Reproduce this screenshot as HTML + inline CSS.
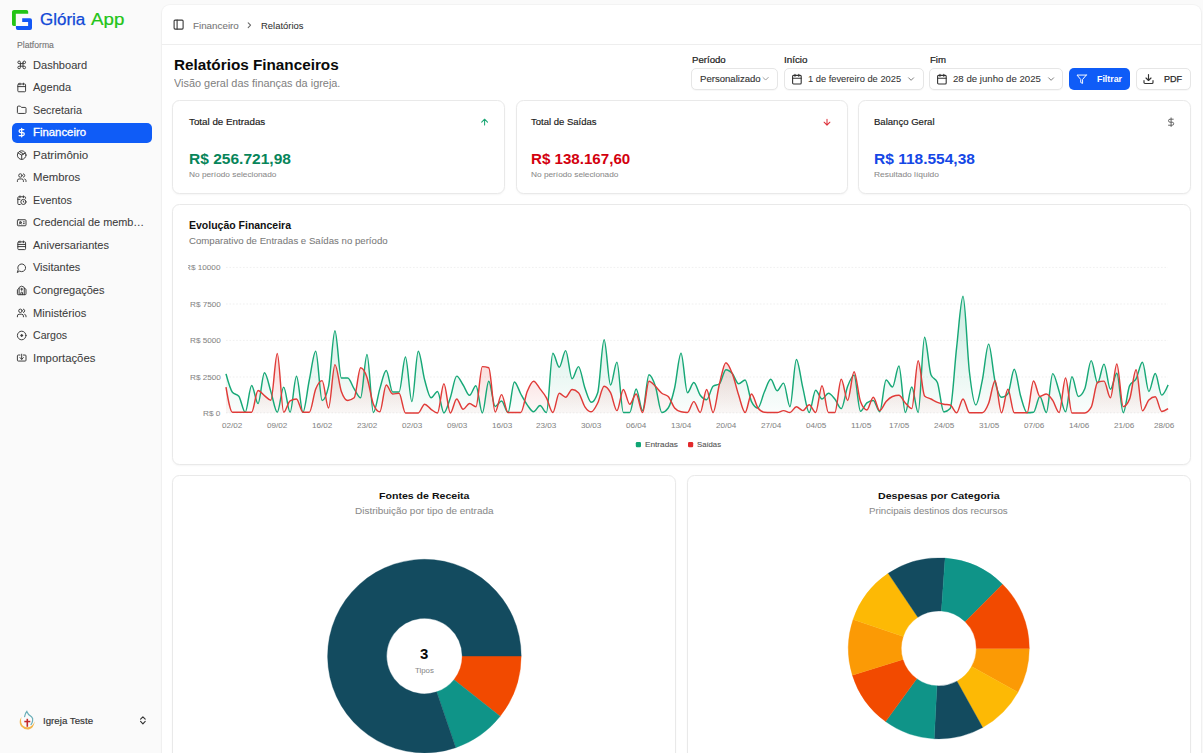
<!DOCTYPE html>
<html><head><meta charset="utf-8"><title>Relatórios Financeiros</title>
<style>
html,body{margin:0;padding:0;}
body{width:1203px;height:753px;overflow:hidden;background:#fafafa;position:relative;font-family:"Liberation Sans", sans-serif;}
.b{position:absolute;}
.t{position:absolute;line-height:1;white-space:nowrap;transform-origin:0 0;}
svg.ov{position:absolute;left:0;top:0;}
</style></head><body>
<div class="b" style="left:162.00px;top:5.00px;width:1039.00px;height:895.00px;background:#fff;border-radius:8px;box-shadow:0 0 0 1px rgba(0,0,0,0.025),0 1px 3px rgba(0,0,0,0.05);"></div><div class="b" style="left:162.00px;top:44.00px;width:1039.00px;height:1.00px;background:#eeeeee;"></div><div class="b" style="left:172.20px;top:100.30px;width:332.90px;height:94.00px;background:#fff;border:1px solid #e9e9e9;border-radius:7.5px;box-shadow:0 1px 2px rgba(0,0,0,0.04);box-sizing:border-box;"></div><div class="b" style="left:515.50px;top:100.30px;width:332.30px;height:94.00px;background:#fff;border:1px solid #e9e9e9;border-radius:7.5px;box-shadow:0 1px 2px rgba(0,0,0,0.04);box-sizing:border-box;"></div><div class="b" style="left:857.80px;top:100.30px;width:332.80px;height:94.00px;background:#fff;border:1px solid #e9e9e9;border-radius:7.5px;box-shadow:0 1px 2px rgba(0,0,0,0.04);box-sizing:border-box;"></div><div class="b" style="left:172.20px;top:204.40px;width:1018.40px;height:260.60px;background:#fff;border:1px solid #e9e9e9;border-radius:7.5px;box-shadow:0 1px 2px rgba(0,0,0,0.04);box-sizing:border-box;"></div><div class="b" style="left:172.20px;top:475.40px;width:504.00px;height:424.60px;background:#fff;border:1px solid #e9e9e9;border-radius:7.5px;box-shadow:0 1px 2px rgba(0,0,0,0.04);box-sizing:border-box;"></div><div class="b" style="left:687.10px;top:475.40px;width:503.50px;height:424.60px;background:#fff;border:1px solid #e9e9e9;border-radius:7.5px;box-shadow:0 1px 2px rgba(0,0,0,0.04);box-sizing:border-box;"></div><div class="b" style="left:691.00px;top:68.00px;width:87.00px;height:22.00px;background:#fff;border:1px solid #e6e6e6;border-radius:5px;box-shadow:0 1px 1px rgba(0,0,0,0.03);box-sizing:border-box;"></div><div class="b" style="left:784.20px;top:68.00px;width:139.40px;height:21.80px;background:#fff;border:1px solid #e6e6e6;border-radius:5px;box-shadow:0 1px 1px rgba(0,0,0,0.03);box-sizing:border-box;"></div><div class="b" style="left:929.20px;top:68.00px;width:134.10px;height:21.80px;background:#fff;border:1px solid #e6e6e6;border-radius:5px;box-shadow:0 1px 1px rgba(0,0,0,0.03);box-sizing:border-box;"></div><div class="b" style="left:1069.00px;top:68.00px;width:61.30px;height:22.00px;background:#0f5cf7;border-radius:5px;"></div><div class="b" style="left:1135.80px;top:68.00px;width:55.10px;height:22.00px;background:#fff;border:1px solid #e6e6e6;border-radius:5px;box-shadow:0 1px 1px rgba(0,0,0,0.03);box-sizing:border-box;"></div><div class="b" style="left:12.10px;top:123.00px;width:140.10px;height:19.80px;background:#0f5cf7;border-radius:5px;"></div>
<svg class="ov" width="1203" height="753" viewBox="0 0 1203 753">
<g><path d="M14 10 H26.5 Q28.2 10 28.2 11.8 V13.8 H15.8 V26 H13.8 Q12 26 12 24.2 V11.8 Q12 10 14 10Z" fill="#22c415"/><path d="M22.2 18.3 H30 Q32 18.3 32 20.3 V28 Q32 30 30 30 H17.8 Q15.9 30 15.9 28 V26.1 H28.1 V22 H22.2Z" fill="#1357f5"/></g><g transform="translate(16.540,59.740) scale(0.4300)" color="#3d3d3d" fill="none" stroke="#3d3d3d" stroke-width="2.3" stroke-linecap="round" stroke-linejoin="round"><path d="M15 6v12a3 3 0 1 0 3-3H6a3 3 0 1 0 3 3V6a3 3 0 1 0-3 3h12a3 3 0 1 0-3-3"/></g><g transform="translate(16.540,82.290) scale(0.4300)" color="#3d3d3d" fill="none" stroke="#3d3d3d" stroke-width="2.3" stroke-linecap="round" stroke-linejoin="round"><rect x="3" y="4" width="18" height="18" rx="2"/><path d="M16 2v4M8 2v4M3 10h18"/></g><g transform="translate(16.540,104.840) scale(0.4300)" color="#3d3d3d" fill="none" stroke="#3d3d3d" stroke-width="2.3" stroke-linecap="round" stroke-linejoin="round"><path d="M20 20a2 2 0 0 0 2-2V8a2 2 0 0 0-2-2h-7.9a2 2 0 0 1-1.69-.9L9.6 3.9A2 2 0 0 0 7.93 3H4a2 2 0 0 0-2 2v13a2 2 0 0 0 2 2Z"/></g><g transform="translate(16.540,127.390) scale(0.4300)" color="#ffffff" fill="none" stroke="#ffffff" stroke-width="2.9" stroke-linecap="round" stroke-linejoin="round"><path d="M12 2v20M17 5H9.5a3.5 3.5 0 0 0 0 7h5a3.5 3.5 0 0 1 0 7H6"/></g><g transform="translate(16.540,149.940) scale(0.4300)" color="#3d3d3d" fill="none" stroke="#3d3d3d" stroke-width="2.3" stroke-linecap="round" stroke-linejoin="round"><circle cx="12" cy="12" r="10"/><path d="M12 22V12M3.3 7l8.7 5 8.7-5M7.5 4.27l9 5.15"/></g><g transform="translate(16.540,172.490) scale(0.4300)" color="#3d3d3d" fill="none" stroke="#3d3d3d" stroke-width="2.3" stroke-linecap="round" stroke-linejoin="round"><path d="M16 21v-2a4 4 0 0 0-4-4H6a4 4 0 0 0-4 4v2"/><circle cx="9" cy="7" r="4"/><path d="M22 21v-2a4 4 0 0 0-3-3.87M16 3.13a4 4 0 0 1 0 7.75"/></g><g transform="translate(16.540,195.040) scale(0.4300)" color="#3d3d3d" fill="none" stroke="#3d3d3d" stroke-width="2.3" stroke-linecap="round" stroke-linejoin="round"><path d="M21 7.5V6a2 2 0 0 0-2-2H5a2 2 0 0 0-2 2v14a2 2 0 0 0 2 2h3.5M16 2v4M8 2v4M3 10h5M17.5 17.5 16 16.3V14"/><circle cx="16" cy="16" r="6"/></g><g transform="translate(16.540,217.590) scale(0.4300)" color="#3d3d3d" fill="none" stroke="#3d3d3d" stroke-width="2.3" stroke-linecap="round" stroke-linejoin="round"><path d="M16 10h2M16 14h2M6.17 15a3 3 0 0 1 5.66 0"/><circle cx="9" cy="11" r="2"/><rect x="2" y="5" width="20" height="14" rx="2"/></g><g transform="translate(16.540,240.140) scale(0.4300)" color="#3d3d3d" fill="none" stroke="#3d3d3d" stroke-width="2.3" stroke-linecap="round" stroke-linejoin="round"><rect x="3" y="4" width="18" height="18" rx="2"/><path d="M16 2v4M8 2v4M3 10h18M3 15h18"/></g><g transform="translate(16.540,262.690) scale(0.4300)" color="#3d3d3d" fill="none" stroke="#3d3d3d" stroke-width="2.3" stroke-linecap="round" stroke-linejoin="round"><path d="M7.9 20A9 9 0 1 0 4 16.1L2 22Z"/></g><g transform="translate(16.540,285.240) scale(0.4300)" color="#3d3d3d" fill="none" stroke="#3d3d3d" stroke-width="2.3" stroke-linecap="round" stroke-linejoin="round"><path d="M10 9h4M12 7v5M14 22v-4a2 2 0 0 0-4 0v4M18 22V5.618a1 1 0 0 0-.553-.894l-4.553-2.277a2 2 0 0 0-1.788 0L6.553 4.724A1 1 0 0 0 6 5.618V22M18 7l3.447 1.724a1 1 0 0 1 .553.894V20a2 2 0 0 1-2 2H4a2 2 0 0 1-2-2v-9.382a1 1 0 0 1 .553-.894L6 7"/></g><g transform="translate(16.540,307.790) scale(0.4300)" color="#3d3d3d" fill="none" stroke="#3d3d3d" stroke-width="2.3" stroke-linecap="round" stroke-linejoin="round"><path d="M16 21v-2a4 4 0 0 0-4-4H6a4 4 0 0 0-4 4v2"/><circle cx="9" cy="7" r="4"/><path d="M22 21v-2a4 4 0 0 0-3-3.87M16 3.13a4 4 0 0 1 0 7.75"/></g><g transform="translate(16.540,330.340) scale(0.4300)" color="#3d3d3d" fill="none" stroke="#3d3d3d" stroke-width="2.3" stroke-linecap="round" stroke-linejoin="round"><circle cx="12" cy="12" r="10"/><circle cx="12" cy="12" r="2.2" fill="currentColor"/></g><g transform="translate(16.540,352.890) scale(0.4300)" color="#3d3d3d" fill="none" stroke="#3d3d3d" stroke-width="2.3" stroke-linecap="round" stroke-linejoin="round"><path d="M12 3v12M8 11l4 4 4-4M8 5H4a2 2 0 0 0-2 2v10a2 2 0 0 0 2 2h16a2 2 0 0 0 2-2V7a2 2 0 0 0-2-2h-4"/></g><g><path d="M21.4,716.9 Q18.2,722 21,726.3 Q24.5,730.2 29.5,729.2 Q33.8,727.8 34.8,721.2 Q32.6,726.6 28,727.3 Q22.5,727.5 21.2,722.5 Q20.8,719.8 21.4,716.9Z" fill="#f4b54a"/><path d="M24.6,716.6 Q25,713.5 26.8,711.5 Q27.8,714.5 31.5,716.8 Q33.2,718.2 32.6,720.8 Q32.2,723 31,724.6" fill="none" stroke="#6aaeb8" stroke-width="1.2" stroke-linecap="round"/><rect x="26.5" y="718.8" width="1.6" height="8" fill="#c42a2a"/><rect x="24.3" y="720.8" width="6" height="1.5" fill="#c42a2a"/></g><path d="M140.6,719.2 L142.9,716.8 L145.2,719.2 M140.6,721.4 L142.9,723.8 L145.2,721.4" fill="none" stroke="#333" stroke-width="1.15" stroke-linecap="round" stroke-linejoin="round"/><g transform="translate(172.600,18.600) scale(0.5000)" color="#3a3a3a" fill="none" stroke="#3a3a3a" stroke-width="2.2" stroke-linecap="round" stroke-linejoin="round"><rect x="3" y="3" width="18" height="18" rx="2"/><path d="M9 3v18"/></g><path d="M248.2,22.8 L250.6,25.2 L248.2,27.6" fill="none" stroke="#666" stroke-width="1.05" stroke-linecap="round" stroke-linejoin="round"/><g transform="translate(760.400,73.550) scale(0.4333)" color="#9a9a9a" fill="none" stroke="#9a9a9a" stroke-width="2.2" stroke-linecap="round" stroke-linejoin="round"><path d="m6 9 6 6 6-6"/></g><g transform="translate(791.167,73.467) scale(0.4778)" color="#333333" fill="none" stroke="#333333" stroke-width="2.3" stroke-linecap="round" stroke-linejoin="round"><rect x="3" y="4" width="18" height="18" rx="2"/><path d="M16 2v4M8 2v4M3 10h18"/></g><g transform="translate(906.100,74.050) scale(0.4167)" color="#777777" fill="none" stroke="#777777" stroke-width="2.3" stroke-linecap="round" stroke-linejoin="round"><path d="m6 9 6 6 6-6"/></g><g transform="translate(936.167,73.467) scale(0.4778)" color="#333333" fill="none" stroke="#333333" stroke-width="2.3" stroke-linecap="round" stroke-linejoin="round"><rect x="3" y="4" width="18" height="18" rx="2"/><path d="M16 2v4M8 2v4M3 10h18"/></g><g transform="translate(1046.100,74.050) scale(0.4167)" color="#777777" fill="none" stroke="#777777" stroke-width="2.3" stroke-linecap="round" stroke-linejoin="round"><path d="m6 9 6 6 6-6"/></g><g transform="translate(1076.070,73.670) scale(0.4650)" color="#ffffff" fill="none" stroke="#ffffff" stroke-width="2.1" stroke-linecap="round" stroke-linejoin="round"><polygon points="22 3 2 3 10 12.46 10 19 14 21 14 12.46 22 3"/></g><g transform="translate(1142.500,73.000) scale(0.5000)" color="#333333" fill="none" stroke="#333333" stroke-width="2.3" stroke-linecap="round" stroke-linejoin="round"><path d="M21 15v4a2 2 0 0 1-2 2H5a2 2 0 0 1-2-2v-4M7 10l5 5 5-5M12 15V3"/></g><g transform="translate(479.629,117.129) scale(0.4143)" color="#1aa673" fill="none" stroke="#1aa673" stroke-width="2.5" stroke-linecap="round" stroke-linejoin="round"><path d="m5 12 7-7 7 7M12 19V5"/></g><g transform="translate(822.029,117.229) scale(0.4143)" color="#dd2f38" fill="none" stroke="#dd2f38" stroke-width="2.5" stroke-linecap="round" stroke-linejoin="round"><path d="M12 5v14M19 12l-7 7-7-7"/></g><g transform="translate(1165.940,117.040) scale(0.4300)" color="#555555" fill="none" stroke="#555555" stroke-width="2.1" stroke-linecap="round" stroke-linejoin="round"><path d="M12 2v20M17 5H9.5a3.5 3.5 0 0 0 0 7h5a3.5 3.5 0 0 1 0 7H6"/></g><line x1="226" y1="267.4" x2="1168" y2="267.4" stroke="#e9e9e9" stroke-width="0.75" stroke-dasharray="1.6 1.8"/><line x1="226" y1="304.0" x2="1168" y2="304.0" stroke="#e9e9e9" stroke-width="0.75" stroke-dasharray="1.6 1.8"/><line x1="226" y1="340.4" x2="1168" y2="340.4" stroke="#e9e9e9" stroke-width="0.75" stroke-dasharray="1.6 1.8"/><line x1="226" y1="377.0" x2="1168" y2="377.0" stroke="#e9e9e9" stroke-width="0.75" stroke-dasharray="1.6 1.8"/><line x1="226" y1="412.9" x2="1168" y2="412.9" stroke="#e9e9e9" stroke-width="0.75" stroke-dasharray="1.6 1.8"/><defs><linearGradient id="gg" x1="0" y1="0" x2="0" y2="1"><stop offset="0" stop-color="#10a574" stop-opacity="0.22"/><stop offset="1" stop-color="#10a574" stop-opacity="0.02"/></linearGradient><linearGradient id="rg" x1="0" y1="0" x2="0" y2="1"><stop offset="0" stop-color="#e0322f" stop-opacity="0.2"/><stop offset="1" stop-color="#e0322f" stop-opacity="0.03"/></linearGradient></defs><path d="M226.00,373.90C228.14,381.72,230.27,389.53,232.41,392.20C234.55,394.87,236.68,393.53,238.82,396.20C240.95,398.87,243.09,412.20,245.23,412.20C247.36,412.20,249.50,385.40,251.64,385.40C253.77,385.40,255.91,403.60,258.04,403.60C260.18,403.60,262.32,372.80,264.45,372.80C266.59,372.80,268.73,385.03,270.86,391.60C273.00,398.17,275.13,412.20,277.27,412.20C279.41,412.20,281.54,387.10,283.68,387.10C285.82,387.10,287.95,412.20,290.09,412.20C292.22,412.20,294.36,376.20,296.50,376.20C298.63,376.20,300.77,412.20,302.91,412.20C305.04,412.20,307.18,390.17,309.31,380.00C311.45,369.83,313.59,351.20,315.72,351.20C317.86,351.20,320.00,400.40,322.13,400.40C324.27,400.40,326.41,395.70,328.54,386.30C330.68,376.90,332.81,330.80,334.95,330.80C337.09,330.80,339.22,378.00,341.36,378.00C343.50,378.00,345.63,378.00,347.77,378.00C349.90,378.00,352.04,385.60,354.18,388.90C356.31,392.20,358.45,397.80,360.59,397.80C362.72,397.80,364.86,354.40,366.99,354.40C369.13,354.40,371.27,412.50,373.40,412.50C375.54,412.50,377.68,395.92,379.81,388.90C381.95,381.88,384.08,370.40,386.22,370.40C388.36,370.40,390.49,392.00,392.63,392.00C394.77,392.00,396.90,392.00,399.04,392.00C401.18,392.00,403.31,357.00,405.45,357.00C407.58,357.00,409.72,401.60,411.86,401.60C413.99,401.60,416.13,351.30,418.27,351.30C420.40,351.30,422.54,372.25,424.67,380.00C426.81,387.75,428.95,397.80,431.08,397.80C433.22,397.80,435.36,391.40,437.49,391.40C439.63,391.40,441.76,412.90,443.90,412.90C446.04,412.90,448.17,403.93,450.31,397.80C452.45,391.67,454.58,376.10,456.72,376.10C458.85,376.10,460.99,381.80,463.13,385.00C465.26,388.20,467.40,395.30,469.54,395.30C471.67,395.30,473.81,385.70,475.94,385.70C478.08,385.70,480.22,412.90,482.35,412.90C484.49,412.90,486.63,381.20,488.76,381.20C490.90,381.20,493.04,406.40,495.17,406.40C497.31,406.40,499.44,401.00,501.58,401.00C503.72,401.00,505.85,412.50,507.99,412.50C510.13,412.50,512.26,381.90,514.40,381.90C516.53,381.90,518.67,390.18,520.81,394.00C522.94,397.82,525.08,401.83,527.22,404.80C529.35,407.77,531.49,411.80,533.62,411.80C535.76,411.80,537.90,405.50,540.03,405.50C542.17,405.50,544.31,412.50,546.44,412.50C548.58,412.50,550.71,353.20,552.85,353.20C554.99,353.20,557.12,367.20,559.26,367.20C561.40,367.20,563.53,350.60,565.67,350.60C567.80,350.60,569.94,378.70,572.08,378.70C574.21,378.70,576.35,366.60,578.49,366.60C580.62,366.60,582.76,382.05,584.90,388.00C587.03,393.95,589.17,402.30,591.30,402.30C593.44,402.30,595.58,399.10,597.71,392.70C599.85,386.30,601.99,339.80,604.12,339.80C606.26,339.80,608.39,385.00,610.53,385.00C612.67,385.00,614.80,362.10,616.94,362.10C619.08,362.10,621.21,412.50,623.35,412.50C625.48,412.50,627.62,412.50,629.76,412.50C631.89,412.50,634.03,388.90,636.17,388.90C638.30,388.90,640.44,410.60,642.57,410.60C644.71,410.60,646.85,374.80,648.98,374.80C651.12,374.80,653.26,380.02,655.39,386.30C657.53,392.58,659.67,412.50,661.80,412.50C663.94,412.50,666.07,411.00,668.21,408.00C670.35,405.00,672.48,397.13,674.62,388.00C676.76,378.87,678.89,353.20,681.03,353.20C683.16,353.20,685.30,392.70,687.44,392.70C689.57,392.70,691.71,382.50,693.85,382.50C695.98,382.50,698.12,392.43,700.25,395.30C702.39,398.17,704.53,399.70,706.66,399.70C708.80,399.70,710.94,387.97,713.07,386.30C715.21,384.63,717.34,385.47,719.48,383.80C721.62,382.13,723.75,369.70,725.89,369.70C728.03,369.70,730.16,371.25,732.30,373.60C734.43,375.95,736.57,383.80,738.71,383.80C740.84,383.80,742.98,380.00,745.12,380.00C747.25,380.00,749.39,397.33,751.53,401.60C753.66,405.87,755.80,408.00,757.93,408.00C760.07,408.00,762.21,396.78,764.34,392.00C766.48,387.22,768.62,379.30,770.75,379.30C772.89,379.30,775.02,390.80,777.16,390.80C779.30,390.80,781.43,383.10,783.57,383.10C785.71,383.10,787.84,406.70,789.98,406.70C792.11,406.70,794.25,359.50,796.39,359.50C798.52,359.50,800.66,378.77,802.80,387.60C804.93,396.43,807.07,412.50,809.20,412.50C811.34,412.50,813.48,390.20,815.61,390.20C817.75,390.20,819.89,399.00,822.02,399.00C824.16,399.00,826.30,393.30,828.43,393.30C830.57,393.30,832.70,396.45,834.84,399.00C836.98,401.55,839.11,408.60,841.25,408.60C843.39,408.60,845.52,391.88,847.66,386.30C849.79,380.72,851.93,375.10,854.07,375.10C856.20,375.10,858.34,411.20,860.48,411.20C862.61,411.20,864.75,404.57,866.88,402.90C869.02,401.23,871.16,400.40,873.29,400.40C875.43,400.40,877.57,411.80,879.70,411.80C881.84,411.80,883.97,380.00,886.11,380.00C888.25,380.00,890.38,387.00,892.52,387.00C894.66,387.00,896.79,365.90,898.93,365.90C901.06,365.90,903.20,412.50,905.34,412.50C907.47,412.50,909.61,387.00,911.75,387.00C913.88,387.00,916.02,412.50,918.16,412.50C920.29,412.50,922.43,337.20,924.56,337.20C926.70,337.20,928.84,369.67,930.97,374.80C933.11,379.93,935.25,377.37,937.38,382.50C939.52,387.63,941.65,411.90,943.79,411.90C945.93,411.90,948.06,410.77,950.20,408.50C952.34,406.23,954.47,366.30,956.61,347.60C958.74,328.90,960.88,296.30,963.02,296.30C965.15,296.30,967.29,353.88,969.43,372.00C971.56,390.12,973.70,405.00,975.83,405.00C977.97,405.00,980.11,390.85,982.24,380.70C984.38,370.55,986.52,344.10,988.65,344.10C990.79,344.10,992.92,372.65,995.06,381.50C997.20,390.35,999.33,397.20,1001.47,397.20C1003.61,397.20,1005.74,396.03,1007.88,393.70C1010.02,391.37,1012.15,369.30,1014.29,369.30C1016.42,369.30,1018.56,389.05,1020.70,396.30C1022.83,403.55,1024.97,412.80,1027.11,412.80C1029.24,412.80,1031.38,412.63,1033.51,412.30C1035.65,411.97,1037.79,396.40,1039.92,396.40C1042.06,396.40,1044.20,412.50,1046.33,412.50C1048.47,412.50,1050.60,373.60,1052.74,373.60C1054.88,373.60,1057.01,385.03,1059.15,391.40C1061.29,397.77,1063.42,411.80,1065.56,411.80C1067.69,411.80,1069.83,376.80,1071.97,376.80C1074.10,376.80,1076.24,396.40,1078.38,396.40C1080.51,396.40,1082.65,393.87,1084.79,388.80C1086.92,383.73,1089.06,360.60,1091.19,360.60C1093.33,360.60,1095.47,382.90,1097.60,382.90C1099.74,382.90,1101.88,364.10,1104.01,364.10C1106.15,364.10,1108.28,389.30,1110.42,389.30C1112.56,389.30,1114.69,373.20,1116.83,373.20C1118.97,373.20,1121.10,412.70,1123.24,412.70C1125.37,412.70,1127.51,390.07,1129.65,385.60C1131.78,381.13,1133.92,382.80,1136.06,378.90C1138.19,375.00,1140.33,362.20,1142.46,362.20C1144.60,362.20,1146.74,391.40,1148.87,391.40C1151.01,391.40,1153.15,373.50,1155.28,373.50C1157.42,373.50,1159.55,395.10,1161.69,395.10C1163.83,395.10,1165.96,390.00,1168.10,384.90L1168.1,412.9L226,412.9Z" fill="url(#gg)"/><path d="M226.00,387.10C228.14,399.65,230.27,412.20,232.41,412.20C234.55,412.20,236.68,412.20,238.82,412.20C240.95,412.20,243.09,412.20,245.23,412.20C247.36,412.20,249.50,412.20,251.64,412.20C253.77,412.20,255.91,390.50,258.04,390.50C260.18,390.50,262.32,393.98,264.45,395.60C266.59,397.22,268.73,400.20,270.86,400.20C273.00,400.20,275.13,353.40,277.27,353.40C279.41,353.40,281.54,412.20,283.68,412.20C285.82,412.20,287.95,402.00,290.09,400.80C292.22,399.60,294.36,399.00,296.50,399.00C298.63,399.00,300.77,412.20,302.91,412.20C305.04,412.20,307.18,412.20,309.31,412.20C311.45,412.20,313.59,394.27,315.72,389.00C317.86,383.73,320.00,380.60,322.13,380.60C324.27,380.60,326.41,408.00,328.54,408.00C330.68,408.00,332.81,364.60,334.95,364.60C337.09,364.60,339.22,385.43,341.36,391.40C343.50,397.37,345.63,400.40,347.77,400.40C349.90,400.40,352.04,399.53,354.18,397.80C356.31,396.07,358.45,367.80,360.59,367.80C362.72,367.80,364.86,371.33,366.99,377.40C369.13,383.47,371.27,399.13,373.40,404.20C375.54,409.27,377.68,411.80,379.81,411.80C381.95,411.80,384.08,385.00,386.22,385.00C388.36,385.00,390.49,394.00,392.63,394.00C394.77,394.00,396.90,393.30,399.04,393.30C401.18,393.30,403.31,412.90,405.45,412.90C407.58,412.90,409.72,412.90,411.86,412.90C413.99,412.90,416.13,412.90,418.27,412.90C420.40,412.90,422.54,404.20,424.67,404.20C426.81,404.20,428.95,407.85,431.08,409.30C433.22,410.75,435.36,412.90,437.49,412.90C439.63,412.90,441.76,383.80,443.90,383.80C446.04,383.80,448.17,412.90,450.31,412.90C452.45,412.90,454.58,399.00,456.72,399.00C458.85,399.00,460.99,409.30,463.13,409.30C465.26,409.30,467.40,403.50,469.54,403.50C471.67,403.50,473.81,406.70,475.94,406.70C478.08,406.70,480.22,366.60,482.35,366.60C484.49,366.60,486.63,367.00,488.76,367.80C490.90,368.60,493.04,412.00,495.17,412.00C497.31,412.00,499.44,394.60,501.58,394.60C503.72,394.60,505.85,412.50,507.99,412.50C510.13,412.50,512.26,412.50,514.40,412.50C516.53,412.50,518.67,412.50,520.81,412.50C522.94,412.50,525.08,396.62,527.22,391.40C529.35,386.18,531.49,381.20,533.62,381.20C535.76,381.20,537.90,386.13,540.03,388.90C542.17,391.67,544.31,393.87,546.44,397.80C548.58,401.73,550.71,412.50,552.85,412.50C554.99,412.50,557.12,393.30,559.26,393.30C561.40,393.30,563.53,397.20,565.67,397.20C567.80,397.20,569.94,389.50,572.08,389.50C574.21,389.50,576.35,390.57,578.49,392.70C580.62,394.83,582.76,403.62,584.90,406.80C587.03,409.98,589.17,411.80,591.30,411.80C593.44,411.80,595.58,407.25,597.71,403.00C599.85,398.75,601.99,386.30,604.12,386.30C606.26,386.30,608.39,388.65,610.53,392.70C612.67,396.75,614.80,410.60,616.94,410.60C619.08,410.60,621.21,389.50,623.35,389.50C625.48,389.50,627.62,404.20,629.76,404.20C631.89,404.20,634.03,394.00,636.17,394.00C638.30,394.00,640.44,412.50,642.57,412.50C644.71,412.50,646.85,381.20,648.98,381.20C651.12,381.20,653.26,384.28,655.39,386.30C657.53,388.32,659.67,391.60,661.80,393.30C663.94,395.00,666.07,394.37,668.21,396.50C670.35,398.63,672.48,405.47,674.62,408.00C676.76,410.53,678.89,411.33,681.03,411.80C683.16,412.27,685.30,412.50,687.44,412.50C689.57,412.50,691.71,401.60,693.85,401.60C695.98,401.60,698.12,412.50,700.25,412.50C702.39,412.50,704.53,389.50,706.66,389.50C708.80,389.50,710.94,412.50,713.07,412.50C715.21,412.50,717.34,392.10,719.48,383.80C721.62,375.50,723.75,362.70,725.89,362.70C728.03,362.70,730.16,368.17,732.30,373.60C734.43,379.03,736.57,388.82,738.71,395.30C740.84,401.78,742.98,412.50,745.12,412.50C747.25,412.50,749.39,394.00,751.53,394.00C753.66,394.00,755.80,405.20,757.93,408.00C760.07,410.80,762.21,412.00,764.34,412.20C766.48,412.40,768.62,412.50,770.75,412.50C772.89,412.50,775.02,412.50,777.16,412.50C779.30,412.50,781.43,410.60,783.57,410.60C785.71,410.60,787.84,412.50,789.98,412.50C792.11,412.50,794.25,406.70,796.39,406.70C798.52,406.70,800.66,410.60,802.80,410.60C804.93,410.60,807.07,404.80,809.20,404.80C811.34,404.80,813.48,412.50,815.61,412.50C817.75,412.50,819.89,385.70,822.02,385.70C824.16,385.70,826.30,412.50,828.43,412.50C830.57,412.50,832.70,412.50,834.84,412.50C836.98,412.50,839.11,379.30,841.25,379.30C843.39,379.30,845.52,400.40,847.66,400.40C849.79,400.40,851.93,371.70,854.07,371.70C856.20,371.70,858.34,396.00,860.48,401.60C862.61,407.20,864.75,410.00,866.88,410.00C869.02,410.00,871.16,397.20,873.29,397.20C875.43,397.20,877.57,410.60,879.70,410.60C881.84,410.60,883.97,403.95,886.11,401.60C888.25,399.25,890.38,397.30,892.52,396.50C894.66,395.70,896.79,395.30,898.93,395.30C901.06,395.30,903.20,400.68,905.34,402.90C907.47,405.12,909.61,408.60,911.75,408.60C913.88,408.60,916.02,360.80,918.16,360.80C920.29,360.80,922.43,393.83,924.56,395.90C926.70,397.97,928.84,397.93,930.97,399.00C933.11,400.07,935.25,401.43,937.38,402.30C939.52,403.17,941.65,403.75,943.79,404.20C945.93,404.65,948.06,404.47,950.20,405.00C952.34,405.53,954.47,412.80,956.61,412.80C958.74,412.80,960.88,398.90,963.02,398.90C965.15,398.90,967.29,412.80,969.43,412.80C971.56,412.80,973.70,412.80,975.83,412.80C977.97,412.80,980.11,412.80,982.24,412.80C984.38,412.80,986.52,408.65,988.65,403.30C990.79,397.95,992.92,380.70,995.06,380.70C997.20,380.70,999.33,412.80,1001.47,412.80C1003.61,412.80,1005.74,389.30,1007.88,389.30C1010.02,389.30,1012.15,412.80,1014.29,412.80C1016.42,412.80,1018.56,412.80,1020.70,412.80C1022.83,412.80,1024.97,412.80,1027.11,412.80C1029.24,412.80,1031.38,381.00,1033.51,381.00C1035.65,381.00,1037.79,396.40,1039.92,396.40C1042.06,396.40,1044.20,394.00,1046.33,394.00C1048.47,394.00,1050.60,397.32,1052.74,400.40C1054.88,403.48,1057.01,412.50,1059.15,412.50C1061.29,412.50,1063.42,377.90,1065.56,377.90C1067.69,377.90,1069.83,412.90,1071.97,412.90C1074.10,412.90,1076.24,412.90,1078.38,412.90C1080.51,412.90,1082.65,412.90,1084.79,412.90C1086.92,412.90,1089.06,411.00,1091.19,407.20C1093.33,403.40,1095.47,383.10,1097.60,382.30C1099.74,381.50,1101.88,381.10,1104.01,381.10C1106.15,381.10,1108.28,397.80,1110.42,397.80C1112.56,397.80,1114.69,363.90,1116.83,363.90C1118.97,363.90,1121.10,406.60,1123.24,406.60C1125.37,406.60,1127.51,404.03,1129.65,398.90C1131.78,393.77,1133.92,369.70,1136.06,369.70C1138.19,369.70,1140.33,410.80,1142.46,410.80C1144.60,410.80,1146.74,402.13,1148.87,400.00C1151.01,397.87,1153.15,396.80,1155.28,396.80C1157.42,396.80,1159.55,411.40,1161.69,411.40C1163.83,411.40,1165.96,410.00,1168.10,408.60L1168.1,412.9L226,412.9Z" fill="url(#rg)"/><path d="M226.00,373.90C228.14,381.72,230.27,389.53,232.41,392.20C234.55,394.87,236.68,393.53,238.82,396.20C240.95,398.87,243.09,412.20,245.23,412.20C247.36,412.20,249.50,385.40,251.64,385.40C253.77,385.40,255.91,403.60,258.04,403.60C260.18,403.60,262.32,372.80,264.45,372.80C266.59,372.80,268.73,385.03,270.86,391.60C273.00,398.17,275.13,412.20,277.27,412.20C279.41,412.20,281.54,387.10,283.68,387.10C285.82,387.10,287.95,412.20,290.09,412.20C292.22,412.20,294.36,376.20,296.50,376.20C298.63,376.20,300.77,412.20,302.91,412.20C305.04,412.20,307.18,390.17,309.31,380.00C311.45,369.83,313.59,351.20,315.72,351.20C317.86,351.20,320.00,400.40,322.13,400.40C324.27,400.40,326.41,395.70,328.54,386.30C330.68,376.90,332.81,330.80,334.95,330.80C337.09,330.80,339.22,378.00,341.36,378.00C343.50,378.00,345.63,378.00,347.77,378.00C349.90,378.00,352.04,385.60,354.18,388.90C356.31,392.20,358.45,397.80,360.59,397.80C362.72,397.80,364.86,354.40,366.99,354.40C369.13,354.40,371.27,412.50,373.40,412.50C375.54,412.50,377.68,395.92,379.81,388.90C381.95,381.88,384.08,370.40,386.22,370.40C388.36,370.40,390.49,392.00,392.63,392.00C394.77,392.00,396.90,392.00,399.04,392.00C401.18,392.00,403.31,357.00,405.45,357.00C407.58,357.00,409.72,401.60,411.86,401.60C413.99,401.60,416.13,351.30,418.27,351.30C420.40,351.30,422.54,372.25,424.67,380.00C426.81,387.75,428.95,397.80,431.08,397.80C433.22,397.80,435.36,391.40,437.49,391.40C439.63,391.40,441.76,412.90,443.90,412.90C446.04,412.90,448.17,403.93,450.31,397.80C452.45,391.67,454.58,376.10,456.72,376.10C458.85,376.10,460.99,381.80,463.13,385.00C465.26,388.20,467.40,395.30,469.54,395.30C471.67,395.30,473.81,385.70,475.94,385.70C478.08,385.70,480.22,412.90,482.35,412.90C484.49,412.90,486.63,381.20,488.76,381.20C490.90,381.20,493.04,406.40,495.17,406.40C497.31,406.40,499.44,401.00,501.58,401.00C503.72,401.00,505.85,412.50,507.99,412.50C510.13,412.50,512.26,381.90,514.40,381.90C516.53,381.90,518.67,390.18,520.81,394.00C522.94,397.82,525.08,401.83,527.22,404.80C529.35,407.77,531.49,411.80,533.62,411.80C535.76,411.80,537.90,405.50,540.03,405.50C542.17,405.50,544.31,412.50,546.44,412.50C548.58,412.50,550.71,353.20,552.85,353.20C554.99,353.20,557.12,367.20,559.26,367.20C561.40,367.20,563.53,350.60,565.67,350.60C567.80,350.60,569.94,378.70,572.08,378.70C574.21,378.70,576.35,366.60,578.49,366.60C580.62,366.60,582.76,382.05,584.90,388.00C587.03,393.95,589.17,402.30,591.30,402.30C593.44,402.30,595.58,399.10,597.71,392.70C599.85,386.30,601.99,339.80,604.12,339.80C606.26,339.80,608.39,385.00,610.53,385.00C612.67,385.00,614.80,362.10,616.94,362.10C619.08,362.10,621.21,412.50,623.35,412.50C625.48,412.50,627.62,412.50,629.76,412.50C631.89,412.50,634.03,388.90,636.17,388.90C638.30,388.90,640.44,410.60,642.57,410.60C644.71,410.60,646.85,374.80,648.98,374.80C651.12,374.80,653.26,380.02,655.39,386.30C657.53,392.58,659.67,412.50,661.80,412.50C663.94,412.50,666.07,411.00,668.21,408.00C670.35,405.00,672.48,397.13,674.62,388.00C676.76,378.87,678.89,353.20,681.03,353.20C683.16,353.20,685.30,392.70,687.44,392.70C689.57,392.70,691.71,382.50,693.85,382.50C695.98,382.50,698.12,392.43,700.25,395.30C702.39,398.17,704.53,399.70,706.66,399.70C708.80,399.70,710.94,387.97,713.07,386.30C715.21,384.63,717.34,385.47,719.48,383.80C721.62,382.13,723.75,369.70,725.89,369.70C728.03,369.70,730.16,371.25,732.30,373.60C734.43,375.95,736.57,383.80,738.71,383.80C740.84,383.80,742.98,380.00,745.12,380.00C747.25,380.00,749.39,397.33,751.53,401.60C753.66,405.87,755.80,408.00,757.93,408.00C760.07,408.00,762.21,396.78,764.34,392.00C766.48,387.22,768.62,379.30,770.75,379.30C772.89,379.30,775.02,390.80,777.16,390.80C779.30,390.80,781.43,383.10,783.57,383.10C785.71,383.10,787.84,406.70,789.98,406.70C792.11,406.70,794.25,359.50,796.39,359.50C798.52,359.50,800.66,378.77,802.80,387.60C804.93,396.43,807.07,412.50,809.20,412.50C811.34,412.50,813.48,390.20,815.61,390.20C817.75,390.20,819.89,399.00,822.02,399.00C824.16,399.00,826.30,393.30,828.43,393.30C830.57,393.30,832.70,396.45,834.84,399.00C836.98,401.55,839.11,408.60,841.25,408.60C843.39,408.60,845.52,391.88,847.66,386.30C849.79,380.72,851.93,375.10,854.07,375.10C856.20,375.10,858.34,411.20,860.48,411.20C862.61,411.20,864.75,404.57,866.88,402.90C869.02,401.23,871.16,400.40,873.29,400.40C875.43,400.40,877.57,411.80,879.70,411.80C881.84,411.80,883.97,380.00,886.11,380.00C888.25,380.00,890.38,387.00,892.52,387.00C894.66,387.00,896.79,365.90,898.93,365.90C901.06,365.90,903.20,412.50,905.34,412.50C907.47,412.50,909.61,387.00,911.75,387.00C913.88,387.00,916.02,412.50,918.16,412.50C920.29,412.50,922.43,337.20,924.56,337.20C926.70,337.20,928.84,369.67,930.97,374.80C933.11,379.93,935.25,377.37,937.38,382.50C939.52,387.63,941.65,411.90,943.79,411.90C945.93,411.90,948.06,410.77,950.20,408.50C952.34,406.23,954.47,366.30,956.61,347.60C958.74,328.90,960.88,296.30,963.02,296.30C965.15,296.30,967.29,353.88,969.43,372.00C971.56,390.12,973.70,405.00,975.83,405.00C977.97,405.00,980.11,390.85,982.24,380.70C984.38,370.55,986.52,344.10,988.65,344.10C990.79,344.10,992.92,372.65,995.06,381.50C997.20,390.35,999.33,397.20,1001.47,397.20C1003.61,397.20,1005.74,396.03,1007.88,393.70C1010.02,391.37,1012.15,369.30,1014.29,369.30C1016.42,369.30,1018.56,389.05,1020.70,396.30C1022.83,403.55,1024.97,412.80,1027.11,412.80C1029.24,412.80,1031.38,412.63,1033.51,412.30C1035.65,411.97,1037.79,396.40,1039.92,396.40C1042.06,396.40,1044.20,412.50,1046.33,412.50C1048.47,412.50,1050.60,373.60,1052.74,373.60C1054.88,373.60,1057.01,385.03,1059.15,391.40C1061.29,397.77,1063.42,411.80,1065.56,411.80C1067.69,411.80,1069.83,376.80,1071.97,376.80C1074.10,376.80,1076.24,396.40,1078.38,396.40C1080.51,396.40,1082.65,393.87,1084.79,388.80C1086.92,383.73,1089.06,360.60,1091.19,360.60C1093.33,360.60,1095.47,382.90,1097.60,382.90C1099.74,382.90,1101.88,364.10,1104.01,364.10C1106.15,364.10,1108.28,389.30,1110.42,389.30C1112.56,389.30,1114.69,373.20,1116.83,373.20C1118.97,373.20,1121.10,412.70,1123.24,412.70C1125.37,412.70,1127.51,390.07,1129.65,385.60C1131.78,381.13,1133.92,382.80,1136.06,378.90C1138.19,375.00,1140.33,362.20,1142.46,362.20C1144.60,362.20,1146.74,391.40,1148.87,391.40C1151.01,391.40,1153.15,373.50,1155.28,373.50C1157.42,373.50,1159.55,395.10,1161.69,395.10C1163.83,395.10,1165.96,390.00,1168.10,384.90" fill="none" stroke="#17a877" stroke-width="1.45"/><path d="M226.00,387.10C228.14,399.65,230.27,412.20,232.41,412.20C234.55,412.20,236.68,412.20,238.82,412.20C240.95,412.20,243.09,412.20,245.23,412.20C247.36,412.20,249.50,412.20,251.64,412.20C253.77,412.20,255.91,390.50,258.04,390.50C260.18,390.50,262.32,393.98,264.45,395.60C266.59,397.22,268.73,400.20,270.86,400.20C273.00,400.20,275.13,353.40,277.27,353.40C279.41,353.40,281.54,412.20,283.68,412.20C285.82,412.20,287.95,402.00,290.09,400.80C292.22,399.60,294.36,399.00,296.50,399.00C298.63,399.00,300.77,412.20,302.91,412.20C305.04,412.20,307.18,412.20,309.31,412.20C311.45,412.20,313.59,394.27,315.72,389.00C317.86,383.73,320.00,380.60,322.13,380.60C324.27,380.60,326.41,408.00,328.54,408.00C330.68,408.00,332.81,364.60,334.95,364.60C337.09,364.60,339.22,385.43,341.36,391.40C343.50,397.37,345.63,400.40,347.77,400.40C349.90,400.40,352.04,399.53,354.18,397.80C356.31,396.07,358.45,367.80,360.59,367.80C362.72,367.80,364.86,371.33,366.99,377.40C369.13,383.47,371.27,399.13,373.40,404.20C375.54,409.27,377.68,411.80,379.81,411.80C381.95,411.80,384.08,385.00,386.22,385.00C388.36,385.00,390.49,394.00,392.63,394.00C394.77,394.00,396.90,393.30,399.04,393.30C401.18,393.30,403.31,412.90,405.45,412.90C407.58,412.90,409.72,412.90,411.86,412.90C413.99,412.90,416.13,412.90,418.27,412.90C420.40,412.90,422.54,404.20,424.67,404.20C426.81,404.20,428.95,407.85,431.08,409.30C433.22,410.75,435.36,412.90,437.49,412.90C439.63,412.90,441.76,383.80,443.90,383.80C446.04,383.80,448.17,412.90,450.31,412.90C452.45,412.90,454.58,399.00,456.72,399.00C458.85,399.00,460.99,409.30,463.13,409.30C465.26,409.30,467.40,403.50,469.54,403.50C471.67,403.50,473.81,406.70,475.94,406.70C478.08,406.70,480.22,366.60,482.35,366.60C484.49,366.60,486.63,367.00,488.76,367.80C490.90,368.60,493.04,412.00,495.17,412.00C497.31,412.00,499.44,394.60,501.58,394.60C503.72,394.60,505.85,412.50,507.99,412.50C510.13,412.50,512.26,412.50,514.40,412.50C516.53,412.50,518.67,412.50,520.81,412.50C522.94,412.50,525.08,396.62,527.22,391.40C529.35,386.18,531.49,381.20,533.62,381.20C535.76,381.20,537.90,386.13,540.03,388.90C542.17,391.67,544.31,393.87,546.44,397.80C548.58,401.73,550.71,412.50,552.85,412.50C554.99,412.50,557.12,393.30,559.26,393.30C561.40,393.30,563.53,397.20,565.67,397.20C567.80,397.20,569.94,389.50,572.08,389.50C574.21,389.50,576.35,390.57,578.49,392.70C580.62,394.83,582.76,403.62,584.90,406.80C587.03,409.98,589.17,411.80,591.30,411.80C593.44,411.80,595.58,407.25,597.71,403.00C599.85,398.75,601.99,386.30,604.12,386.30C606.26,386.30,608.39,388.65,610.53,392.70C612.67,396.75,614.80,410.60,616.94,410.60C619.08,410.60,621.21,389.50,623.35,389.50C625.48,389.50,627.62,404.20,629.76,404.20C631.89,404.20,634.03,394.00,636.17,394.00C638.30,394.00,640.44,412.50,642.57,412.50C644.71,412.50,646.85,381.20,648.98,381.20C651.12,381.20,653.26,384.28,655.39,386.30C657.53,388.32,659.67,391.60,661.80,393.30C663.94,395.00,666.07,394.37,668.21,396.50C670.35,398.63,672.48,405.47,674.62,408.00C676.76,410.53,678.89,411.33,681.03,411.80C683.16,412.27,685.30,412.50,687.44,412.50C689.57,412.50,691.71,401.60,693.85,401.60C695.98,401.60,698.12,412.50,700.25,412.50C702.39,412.50,704.53,389.50,706.66,389.50C708.80,389.50,710.94,412.50,713.07,412.50C715.21,412.50,717.34,392.10,719.48,383.80C721.62,375.50,723.75,362.70,725.89,362.70C728.03,362.70,730.16,368.17,732.30,373.60C734.43,379.03,736.57,388.82,738.71,395.30C740.84,401.78,742.98,412.50,745.12,412.50C747.25,412.50,749.39,394.00,751.53,394.00C753.66,394.00,755.80,405.20,757.93,408.00C760.07,410.80,762.21,412.00,764.34,412.20C766.48,412.40,768.62,412.50,770.75,412.50C772.89,412.50,775.02,412.50,777.16,412.50C779.30,412.50,781.43,410.60,783.57,410.60C785.71,410.60,787.84,412.50,789.98,412.50C792.11,412.50,794.25,406.70,796.39,406.70C798.52,406.70,800.66,410.60,802.80,410.60C804.93,410.60,807.07,404.80,809.20,404.80C811.34,404.80,813.48,412.50,815.61,412.50C817.75,412.50,819.89,385.70,822.02,385.70C824.16,385.70,826.30,412.50,828.43,412.50C830.57,412.50,832.70,412.50,834.84,412.50C836.98,412.50,839.11,379.30,841.25,379.30C843.39,379.30,845.52,400.40,847.66,400.40C849.79,400.40,851.93,371.70,854.07,371.70C856.20,371.70,858.34,396.00,860.48,401.60C862.61,407.20,864.75,410.00,866.88,410.00C869.02,410.00,871.16,397.20,873.29,397.20C875.43,397.20,877.57,410.60,879.70,410.60C881.84,410.60,883.97,403.95,886.11,401.60C888.25,399.25,890.38,397.30,892.52,396.50C894.66,395.70,896.79,395.30,898.93,395.30C901.06,395.30,903.20,400.68,905.34,402.90C907.47,405.12,909.61,408.60,911.75,408.60C913.88,408.60,916.02,360.80,918.16,360.80C920.29,360.80,922.43,393.83,924.56,395.90C926.70,397.97,928.84,397.93,930.97,399.00C933.11,400.07,935.25,401.43,937.38,402.30C939.52,403.17,941.65,403.75,943.79,404.20C945.93,404.65,948.06,404.47,950.20,405.00C952.34,405.53,954.47,412.80,956.61,412.80C958.74,412.80,960.88,398.90,963.02,398.90C965.15,398.90,967.29,412.80,969.43,412.80C971.56,412.80,973.70,412.80,975.83,412.80C977.97,412.80,980.11,412.80,982.24,412.80C984.38,412.80,986.52,408.65,988.65,403.30C990.79,397.95,992.92,380.70,995.06,380.70C997.20,380.70,999.33,412.80,1001.47,412.80C1003.61,412.80,1005.74,389.30,1007.88,389.30C1010.02,389.30,1012.15,412.80,1014.29,412.80C1016.42,412.80,1018.56,412.80,1020.70,412.80C1022.83,412.80,1024.97,412.80,1027.11,412.80C1029.24,412.80,1031.38,381.00,1033.51,381.00C1035.65,381.00,1037.79,396.40,1039.92,396.40C1042.06,396.40,1044.20,394.00,1046.33,394.00C1048.47,394.00,1050.60,397.32,1052.74,400.40C1054.88,403.48,1057.01,412.50,1059.15,412.50C1061.29,412.50,1063.42,377.90,1065.56,377.90C1067.69,377.90,1069.83,412.90,1071.97,412.90C1074.10,412.90,1076.24,412.90,1078.38,412.90C1080.51,412.90,1082.65,412.90,1084.79,412.90C1086.92,412.90,1089.06,411.00,1091.19,407.20C1093.33,403.40,1095.47,383.10,1097.60,382.30C1099.74,381.50,1101.88,381.10,1104.01,381.10C1106.15,381.10,1108.28,397.80,1110.42,397.80C1112.56,397.80,1114.69,363.90,1116.83,363.90C1118.97,363.90,1121.10,406.60,1123.24,406.60C1125.37,406.60,1127.51,404.03,1129.65,398.90C1131.78,393.77,1133.92,369.70,1136.06,369.70C1138.19,369.70,1140.33,410.80,1142.46,410.80C1144.60,410.80,1146.74,402.13,1148.87,400.00C1151.01,397.87,1153.15,396.80,1155.28,396.80C1157.42,396.80,1159.55,411.40,1161.69,411.40C1163.83,411.40,1165.96,410.00,1168.10,408.60" fill="none" stroke="#e03b38" stroke-width="1.45"/><rect x="635.8" y="442" width="5.2" height="5.2" rx="1.2" fill="#10a574"/><rect x="688" y="442" width="5.2" height="5.2" rx="1.2" fill="#e2282b"/><path d="M521.20,656.10A96.8,96.8 0 0 1 500.16,716.36L453.98,679.63A37.8,37.8 0 0 0 462.20,656.10Z" fill="#f24a00" stroke="#f24a00" stroke-width="0.35"/><path d="M500.16,716.36A96.8,96.8 0 0 1 455.76,747.68L436.64,691.86A37.8,37.8 0 0 0 453.98,679.63Z" fill="#0f9488" stroke="#0f9488" stroke-width="0.35"/><path d="M455.76,747.68A96.8,96.8 0 1 1 521.20,656.10L462.20,656.10A37.8,37.8 0 1 0 436.64,691.86Z" fill="#134b5f" stroke="#134b5f" stroke-width="0.35"/><path d="M1029.30,648.40A90.5,90.5 0 0 1 1017.95,692.28L971.60,666.58A37.5,37.5 0 0 0 976.30,648.40Z" fill="#fb9a05" stroke="#fb9a05" stroke-width="0.35"/><path d="M1017.95,692.28A90.5,90.5 0 0 1 982.68,727.55L956.98,681.20A37.5,37.5 0 0 0 971.60,666.58Z" fill="#fdb905" stroke="#fdb905" stroke-width="0.35"/><path d="M982.68,727.55A90.5,90.5 0 0 1 934.22,738.78L936.90,685.85A37.5,37.5 0 0 0 956.98,681.20Z" fill="#134b5f" stroke="#134b5f" stroke-width="0.35"/><path d="M934.22,738.78A90.5,90.5 0 0 1 885.61,721.62L916.76,678.74A37.5,37.5 0 0 0 936.90,685.85Z" fill="#0f9488" stroke="#0f9488" stroke-width="0.35"/><path d="M885.61,721.62A90.5,90.5 0 0 1 852.35,675.16L902.98,659.49A37.5,37.5 0 0 0 916.76,678.74Z" fill="#f24a00" stroke="#f24a00" stroke-width="0.35"/><path d="M852.35,675.16A90.5,90.5 0 0 1 853.08,619.38L903.28,636.38A37.5,37.5 0 0 0 902.98,659.49Z" fill="#fb9a05" stroke="#fb9a05" stroke-width="0.35"/><path d="M853.08,619.38A90.5,90.5 0 0 1 888.19,573.37L917.83,617.31A37.5,37.5 0 0 0 903.28,636.38Z" fill="#fdb905" stroke="#fdb905" stroke-width="0.35"/><path d="M888.19,573.37A90.5,90.5 0 0 1 945.11,558.12L941.42,610.99A37.5,37.5 0 0 0 917.83,617.31Z" fill="#134b5f" stroke="#134b5f" stroke-width="0.35"/><path d="M945.11,558.12A90.5,90.5 0 0 1 1002.57,584.18L965.22,621.79A37.5,37.5 0 0 0 941.42,610.99Z" fill="#0f9488" stroke="#0f9488" stroke-width="0.35"/><path d="M1002.57,584.18A90.5,90.5 0 0 1 1029.30,648.40L976.30,648.40A37.5,37.5 0 0 0 965.22,621.79Z" fill="#f24a00" stroke="#f24a00" stroke-width="0.35"/>
</svg>
<div class="t" style="left:39.95px;top:11.90px;font-size:16.00px;color:#1148d6;transform:scaleX(1.0604);-webkit-text-stroke:0.25px #1148d6;">Glória</div>
<div class="t" style="left:91.05px;top:11.90px;font-size:16.00px;color:#22c418;transform:scaleX(1.1692);-webkit-text-stroke:0.2px #22c418;">App</div>
<div class="t" style="left:17.45px;top:41.00px;font-size:8.30px;color:#737373;transform:scaleX(1.0387);-webkit-text-stroke:0.1px #737373;">Platforma</div>
<div class="t" style="left:32.65px;top:60.50px;font-size:10.30px;color:#3d3d3d;transform:scaleX(1.0756);-webkit-text-stroke:0.06px #3d3d3d;">Dashboard</div>
<div class="t" style="left:32.65px;top:83.05px;font-size:10.30px;color:#3d3d3d;transform:scaleX(1.0722);-webkit-text-stroke:0.06px #3d3d3d;">Agenda</div>
<div class="t" style="left:32.65px;top:105.60px;font-size:10.30px;color:#3d3d3d;transform:scaleX(1.0411);-webkit-text-stroke:0.06px #3d3d3d;">Secretaria</div>
<div class="t" style="left:32.65px;top:128.15px;font-size:10.30px;color:#ffffff;transform:scaleX(1.1039);-webkit-text-stroke:0.3px #ffffff;">Financeiro</div>
<div class="t" style="left:32.65px;top:150.70px;font-size:10.30px;color:#3d3d3d;transform:scaleX(1.1232);-webkit-text-stroke:0.06px #3d3d3d;">Patrimônio</div>
<div class="t" style="left:32.65px;top:173.25px;font-size:10.30px;color:#3d3d3d;transform:scaleX(1.1019);-webkit-text-stroke:0.06px #3d3d3d;">Membros</div>
<div class="t" style="left:32.65px;top:195.80px;font-size:10.30px;color:#3d3d3d;transform:scaleX(1.0481);-webkit-text-stroke:0.06px #3d3d3d;">Eventos</div>
<div class="t" style="left:32.65px;top:218.35px;font-size:10.30px;color:#3d3d3d;transform:scaleX(1.0565);-webkit-text-stroke:0.06px #3d3d3d;">Credencial de memb…</div>
<div class="t" style="left:32.65px;top:240.90px;font-size:10.30px;color:#3d3d3d;transform:scaleX(1.0705);-webkit-text-stroke:0.06px #3d3d3d;">Aniversariantes</div>
<div class="t" style="left:32.65px;top:263.45px;font-size:10.30px;color:#3d3d3d;transform:scaleX(1.0636);-webkit-text-stroke:0.06px #3d3d3d;">Visitantes</div>
<div class="t" style="left:32.65px;top:286.00px;font-size:10.30px;color:#3d3d3d;transform:scaleX(1.0671);-webkit-text-stroke:0.06px #3d3d3d;">Congregações</div>
<div class="t" style="left:32.65px;top:308.55px;font-size:10.30px;color:#3d3d3d;transform:scaleX(1.0826);-webkit-text-stroke:0.06px #3d3d3d;">Ministérios</div>
<div class="t" style="left:32.65px;top:331.10px;font-size:10.30px;color:#3d3d3d;transform:scaleX(1.0274);-webkit-text-stroke:0.06px #3d3d3d;">Cargos</div>
<div class="t" style="left:32.65px;top:353.65px;font-size:10.30px;color:#3d3d3d;transform:scaleX(1.1010);-webkit-text-stroke:0.06px #3d3d3d;">Importações</div>
<div class="t" style="left:42.65px;top:716.50px;font-size:8.80px;color:#333333;transform:scaleX(1.1049);-webkit-text-stroke:0.15px #333333;">Igreja Teste</div>
<div class="t" style="left:192.95px;top:21.50px;font-size:8.80px;color:#777777;transform:scaleX(1.1145);-webkit-text-stroke:0.08px #777777;">Financeiro</div>
<div class="t" style="left:261.25px;top:21.50px;font-size:8.80px;color:#333333;transform:scaleX(1.0726);-webkit-text-stroke:0.06px #333333;">Relatórios</div>
<div class="t" style="left:173.75px;top:59.00px;font-size:13.90px;color:#0a0a0a;transform:scaleX(1.0998);font-weight:700;">Relatórios Financeiros</div>
<div class="t" style="left:173.75px;top:78.90px;font-size:10.00px;color:#808080;transform:scaleX(1.0897);">Visão geral das finanças da igreja.</div>
<div class="t" style="left:691.85px;top:55.60px;font-size:8.60px;color:#222222;transform:scaleX(1.1188);-webkit-text-stroke:0.2px #222222;">Período</div>
<div class="t" style="left:784.25px;top:55.70px;font-size:8.60px;color:#222222;transform:scaleX(1.1433);-webkit-text-stroke:0.2px #222222;">Início</div>
<div class="t" style="left:929.75px;top:55.70px;font-size:8.60px;color:#222222;transform:scaleX(1.1174);-webkit-text-stroke:0.2px #222222;">Fim</div>
<div class="t" style="left:700.05px;top:75.20px;font-size:8.80px;color:#333333;transform:scaleX(1.0884);-webkit-text-stroke:0.12px #333333;">Personalizado</div>
<div class="t" style="left:807.65px;top:75.40px;font-size:8.80px;color:#333333;transform:scaleX(1.0572);-webkit-text-stroke:0.06px #333333;">1 de fevereiro de 2025</div>
<div class="t" style="left:952.65px;top:75.40px;font-size:8.80px;color:#333333;transform:scaleX(1.0952);-webkit-text-stroke:0.06px #333333;">28 de junho de 2025</div>
<div class="t" style="left:1097.05px;top:75.10px;font-size:8.40px;color:#ffffff;transform:scaleX(1.0540);font-weight:700;">Filtrar</div>
<div class="t" style="left:1163.95px;top:75.30px;font-size:8.60px;color:#2a2a2a;transform:scaleX(1.0523);-webkit-text-stroke:0.25px #2a2a2a;">PDF</div>
<div class="t" style="left:188.55px;top:118.30px;font-size:8.40px;color:#1a1a1a;transform:scaleX(1.1702);-webkit-text-stroke:0.15px #1a1a1a;">Total de Entradas</div>
<div class="t" style="left:531.05px;top:118.30px;font-size:8.40px;color:#1a1a1a;transform:scaleX(1.1344);-webkit-text-stroke:0.15px #1a1a1a;">Total de Saídas</div>
<div class="t" style="left:874.05px;top:118.30px;font-size:8.40px;color:#1a1a1a;transform:scaleX(1.1402);-webkit-text-stroke:0.15px #1a1a1a;">Balanço Geral</div>
<div class="t" style="left:189.25px;top:151.50px;font-size:14.40px;color:#07855a;transform:scaleX(1.0794);font-weight:700;">R$ 256.721,98</div>
<div class="t" style="left:531.45px;top:151.50px;font-size:14.40px;color:#d3000e;transform:scaleX(1.0508);font-weight:700;">R$ 138.167,60</div>
<div class="t" style="left:874.25px;top:151.50px;font-size:14.40px;color:#1447e6;transform:scaleX(1.0782);font-weight:700;">R$ 118.554,38</div>
<div class="t" style="left:189.25px;top:171.60px;font-size:7.10px;color:#8a8a8a;transform:scaleX(1.1668);-webkit-text-stroke:0.05px #8a8a8a;">No período selecionado</div>
<div class="t" style="left:531.45px;top:171.60px;font-size:7.10px;color:#8a8a8a;transform:scaleX(1.1668);-webkit-text-stroke:0.05px #8a8a8a;">No período selecionado</div>
<div class="t" style="left:874.25px;top:171.60px;font-size:7.10px;color:#8a8a8a;transform:scaleX(1.1829);-webkit-text-stroke:0.05px #8a8a8a;">Resultado líquido</div>
<div class="t" style="left:188.85px;top:220.60px;font-size:10.00px;color:#111111;transform:scaleX(1.0491);font-weight:700;">Evolução Financeira</div>
<div class="t" style="left:188.85px;top:237.00px;font-size:8.70px;color:#7a7a7a;transform:scaleX(1.1085);-webkit-text-stroke:0.05px #7a7a7a;">Comparativo de Entradas e Saídas no período</div>
<div class="t" style="left:185.24px;top:264.00px;font-size:7.30px;color:#858585;transform:scaleX(1.1200);-webkit-text-stroke:0.04px #858585;">R$ 10000</div>
<div class="t" style="left:189.79px;top:300.60px;font-size:7.30px;color:#858585;transform:scaleX(1.1200);-webkit-text-stroke:0.04px #858585;">R$ 7500</div>
<div class="t" style="left:189.79px;top:337.00px;font-size:7.30px;color:#858585;transform:scaleX(1.1200);-webkit-text-stroke:0.04px #858585;">R$ 5000</div>
<div class="t" style="left:189.79px;top:373.60px;font-size:7.30px;color:#858585;transform:scaleX(1.1200);-webkit-text-stroke:0.04px #858585;">R$ 2500</div>
<div class="t" style="left:203.43px;top:409.50px;font-size:7.30px;color:#858585;transform:scaleX(1.1200);-webkit-text-stroke:0.04px #858585;">R$ 0</div>
<div class="t" style="left:222.00px;top:421.80px;font-size:7.30px;color:#858585;transform:scaleX(1.1167);-webkit-text-stroke:0.04px #858585;">02/02</div>
<div class="t" style="left:266.80px;top:421.80px;font-size:7.30px;color:#858585;transform:scaleX(1.1167);-webkit-text-stroke:0.04px #858585;">09/02</div>
<div class="t" style="left:311.80px;top:421.80px;font-size:7.30px;color:#858585;transform:scaleX(1.1167);-webkit-text-stroke:0.04px #858585;">16/02</div>
<div class="t" style="left:356.70px;top:421.80px;font-size:7.30px;color:#858585;transform:scaleX(1.1167);-webkit-text-stroke:0.04px #858585;">23/02</div>
<div class="t" style="left:401.70px;top:421.80px;font-size:7.30px;color:#858585;transform:scaleX(1.1167);-webkit-text-stroke:0.04px #858585;">02/03</div>
<div class="t" style="left:446.60px;top:421.80px;font-size:7.30px;color:#858585;transform:scaleX(1.1167);-webkit-text-stroke:0.04px #858585;">09/03</div>
<div class="t" style="left:491.50px;top:421.80px;font-size:7.30px;color:#858585;transform:scaleX(1.1167);-webkit-text-stroke:0.04px #858585;">16/03</div>
<div class="t" style="left:536.20px;top:421.80px;font-size:7.30px;color:#858585;transform:scaleX(1.1167);-webkit-text-stroke:0.04px #858585;">23/03</div>
<div class="t" style="left:581.30px;top:421.80px;font-size:7.30px;color:#858585;transform:scaleX(1.1167);-webkit-text-stroke:0.04px #858585;">30/03</div>
<div class="t" style="left:626.10px;top:421.80px;font-size:7.30px;color:#858585;transform:scaleX(1.1167);-webkit-text-stroke:0.04px #858585;">06/04</div>
<div class="t" style="left:670.80px;top:421.80px;font-size:7.30px;color:#858585;transform:scaleX(1.1167);-webkit-text-stroke:0.04px #858585;">13/04</div>
<div class="t" style="left:716.30px;top:421.80px;font-size:7.30px;color:#858585;transform:scaleX(1.1167);-webkit-text-stroke:0.04px #858585;">20/04</div>
<div class="t" style="left:760.90px;top:421.80px;font-size:7.30px;color:#858585;transform:scaleX(1.1167);-webkit-text-stroke:0.04px #858585;">27/04</div>
<div class="t" style="left:805.80px;top:421.80px;font-size:7.30px;color:#858585;transform:scaleX(1.1167);-webkit-text-stroke:0.04px #858585;">04/05</div>
<div class="t" style="left:850.70px;top:421.80px;font-size:7.30px;color:#858585;transform:scaleX(1.1512);-webkit-text-stroke:0.04px #858585;">11/05</div>
<div class="t" style="left:889.20px;top:421.80px;font-size:7.30px;color:#858585;transform:scaleX(1.1167);-webkit-text-stroke:0.04px #858585;">17/05</div>
<div class="t" style="left:934.40px;top:421.80px;font-size:7.30px;color:#858585;transform:scaleX(1.1167);-webkit-text-stroke:0.04px #858585;">24/05</div>
<div class="t" style="left:979.00px;top:421.80px;font-size:7.30px;color:#858585;transform:scaleX(1.1167);-webkit-text-stroke:0.04px #858585;">31/05</div>
<div class="t" style="left:1024.20px;top:421.80px;font-size:7.30px;color:#858585;transform:scaleX(1.1167);-webkit-text-stroke:0.04px #858585;">07/06</div>
<div class="t" style="left:1068.80px;top:421.80px;font-size:7.30px;color:#858585;transform:scaleX(1.1167);-webkit-text-stroke:0.04px #858585;">14/06</div>
<div class="t" style="left:1113.80px;top:421.80px;font-size:7.30px;color:#858585;transform:scaleX(1.1167);-webkit-text-stroke:0.04px #858585;">21/06</div>
<div class="t" style="left:1154.20px;top:421.80px;font-size:7.30px;color:#858585;transform:scaleX(1.1167);-webkit-text-stroke:0.04px #858585;">28/06</div>
<div class="t" style="left:645.05px;top:441.20px;font-size:7.50px;color:#555555;transform:scaleX(1.0960);-webkit-text-stroke:0.1px #555555;">Entradas</div>
<div class="t" style="left:697.25px;top:441.20px;font-size:7.50px;color:#555555;transform:scaleX(1.0281);-webkit-text-stroke:0.1px #555555;">Saídas</div>
<div class="t" style="left:379.15px;top:492.20px;font-size:9.30px;color:#111111;transform:scaleX(1.1374);font-weight:700;">Fontes de Receita</div>
<div class="t" style="left:355.05px;top:507.40px;font-size:8.60px;color:#8a8a8a;transform:scaleX(1.1603);-webkit-text-stroke:0.05px #8a8a8a;">Distribuição por tipo de entrada</div>
<div class="t" style="left:420.45px;top:647.40px;font-size:14.00px;color:#0a0a0a;transform:scaleX(1.0682);font-weight:700;">3</div>
<div class="t" style="left:415.35px;top:667.10px;font-size:7.00px;color:#8a8a8a;transform:scaleX(1.1215);-webkit-text-stroke:0.05px #8a8a8a;">Tipos</div>
<div class="t" style="left:877.85px;top:492.20px;font-size:9.30px;color:#111111;transform:scaleX(1.1433);font-weight:700;">Despesas por Categoria</div>
<div class="t" style="left:869.35px;top:507.40px;font-size:8.60px;color:#8a8a8a;transform:scaleX(1.1247);-webkit-text-stroke:0.05px #8a8a8a;">Principais destinos dos recursos</div>
<div class="b" style="left:176px;top:261px;width:12.2px;height:13px;background:#fff;"></div>
</body></html>
